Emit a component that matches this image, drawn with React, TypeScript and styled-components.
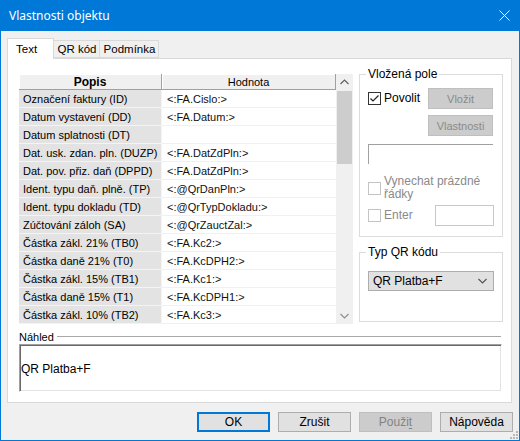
import React from 'react';
import styled, { createGlobalStyle } from 'styled-components';

const GlobalStyle = createGlobalStyle`
  html, body {
    margin: 0;
    padding: 0;
    background: #f0f0f0;
  }
  body {
    font-family: 'Liberation Sans', Arial, sans-serif;
    font-size: 11px;
    color: #000;
  }
  * {
    box-sizing: border-box;
  }
`;

const Window = styled.div`
  position: relative;
  width: 520px;
  height: 441px;
  border: 1px solid #0078d7;
  border-top: none;
  background: #f0f0f0;
  display: flex;
  flex-direction: column;
`;

const TitleBar = styled.div`
  height: 31px;
  flex: none;
  background: #0078d7;
  color: #fff;
  display: flex;
  align-items: center;
  justify-content: space-between;
  padding: 0 9px 0 8px;
  font-family: 'Noto Sans', 'Liberation Sans', sans-serif;
  font-size: 12px;
`;

const CloseButton = styled.span`
  display: flex;
  align-items: center;
  margin-top: -1px;
`;

const Body = styled.div`
  flex: 1;
  display: flex;
  flex-direction: column;
  padding: 7px 7px 0 6px;
`;

const TabStrip = styled.div`
  display: flex;
  align-items: flex-end;
  height: 20px;
`;

const Tab = styled.div<{ $active?: boolean; $width: number }>`
  position: relative;
  width: ${(p) => p.$width}px;
  height: ${(p) => (p.$active ? 21 : 18)}px;
  margin-bottom: ${(p) => (p.$active ? -1 : 0)}px;
  margin-left: ${(p) => (p.$active ? 0 : -1)}px;
  z-index: ${(p) => (p.$active ? 1 : 0)};
  background: ${(p) => (p.$active ? '#fff' : '#f0f0f0')};
  border: 1px solid #d9d9d9;
  border-bottom: ${(p) => (p.$active ? 'none' : '1px solid #d9d9d9')};
  display: flex;
  align-items: ${(p) => (p.$active ? 'flex-start' : 'center')};
  justify-content: ${(p) => (p.$active ? 'flex-start' : 'center')};
  padding: ${(p) => (p.$active ? '3px 0 0 8px' : '0 0 0 1px')};
  font-size: 11.5px;
  line-height: 14px;
  &:first-child {
    margin-left: 0;
  }
`;

const Panel = styled.div`
  height: 345px;
  background: #fff;
  border: 1px solid #d9d9d9;
  display: flex;
  flex-direction: column;
  padding: 15px 8px 0 11px;
`;

const TopRow = styled.div`
  display: flex;
  gap: 6px;
  height: 250px;
`;

const GridBox = styled.div`
  width: 334px;
  display: flex;
`;

const Table = styled.div`
  width: 317px;
  display: grid;
  grid-template-columns: 143px 174px;
  grid-auto-rows: 18px;
  grid-template-rows: 16px;
  overflow: hidden;
`;

const HeaderCell = styled.div<{ $bold?: boolean }>`
  background: #f0f0f0;
  border-right: 1px solid #a0a0a0;
  border-bottom: 1px solid #a0a0a0;
  box-shadow: inset 1px 1px 0 #fff;
  display: flex;
  align-items: center;
  justify-content: center;
  font-weight: ${(p) => (p.$bold ? 700 : 400)};
  font-size: ${(p) => (p.$bold ? 12 : 11)}px;
  line-height: 14px;
`;

const LabelCell = styled.div`
  background: #e3e3e3;
  border-right: 1px solid #f4f4f4;
  border-bottom: 1px solid #f4f4f4;
  display: flex;
  align-items: center;
  padding-left: 4px;
  white-space: nowrap;
`;

const ValueCell = styled.div`
  background: #fff;
  border-bottom: 1px solid #f0f0f0;
  display: flex;
  align-items: center;
  padding-left: 5px;
  white-space: nowrap;
  color: #111;
`;

const ScrollBar = styled.div`
  width: 17px;
  background: #f0f0f0;
  display: flex;
  flex-direction: column;
`;

const ScrollArrow = styled.div`
  height: 16px;
  display: flex;
  align-items: center;
  justify-content: center;
`;

const ScrollTrack = styled.div`
  flex: 1;
  padding: 1px 1px 0;
`;

const Thumb = styled.div`
  height: 73px;
  background: #cdcdcd;
`;

const RightColumn = styled.div`
  width: 144px;
  margin-top: -6px;
  display: flex;
  flex-direction: column;
  gap: 9px;
`;

const GroupBox = styled.fieldset<{ $padTop: number; $padBottom: number }>`
  margin: 0;
  border: 1px solid #dcdcdc;
  padding: ${(p) => p.$padTop}px 9px ${(p) => p.$padBottom}px 8px;
  min-inline-size: 0;
  display: flex;
  flex-direction: column;
`;

const Legend = styled.legend`
  padding: 0 2px;
  margin-left: -2px;
  line-height: 13px;
  font-size: 12px;
`;

const Row = styled.div<{ $mt?: number }>`
  display: flex;
  align-items: center;
  justify-content: space-between;
  margin-top: ${(p) => p.$mt ?? 0}px;
`;

const CheckLabel = styled.label<{ $disabled?: boolean }>`
  display: flex;
  align-items: center;
  gap: 3px;
  color: ${(p) => (p.$disabled ? '#8a8a8a' : '#000')};
  font-size: 12px;
  line-height: 13px;
`;

const Box = styled.span<{ $disabled?: boolean }>`
  width: 13px;
  height: 13px;
  flex: none;
  border: 1px solid ${(p) => (p.$disabled ? '#c4c4c4' : '#333')};
  background: #fff;
  display: flex;
  align-items: center;
  justify-content: center;
`;

const SmallButton = styled.div`
  width: 65px;
  height: 21px;
  margin-left: auto;
  background: #cccccc;
  border: 1px solid #bfbfbf;
  color: #8a8a8a;
  display: flex;
  align-items: center;
  justify-content: center;
`;

const InsetField = styled.div<{ $mt?: number }>`
  height: 20px;
  margin-top: ${(p) => p.$mt ?? 0}px;
  border-top: 1px solid #a0a0a0;
  border-left: 1px solid #a0a0a0;
  background: #fff;
`;

const SmallInput = styled.div`
  width: 59px;
  height: 21px;
  margin-right: -1px;
  border: 1px solid #c8c8c8;
  background: #fff;
`;

const Select = styled.div`
  width: 126px;
  height: 20px;
  background: #e1e1e1;
  border: 1px solid #adadad;
  display: flex;
  align-items: center;
  justify-content: space-between;
  padding: 0 6px 0 4px;
  font-size: 12px;
`;

const PreviewHeader = styled.div`
  display: flex;
  align-items: center;
  gap: 3px;
  height: 13px;
  margin-top: 6px;
  margin-right: 2px;
`;

const Rule = styled.div`
  flex: 1;
  height: 1px;
  background: #a8a8a8;
`;

const Preview = styled.div`
  height: 48px;
  margin: 1px 1px 0 0;
  border-top: 1px solid #a0a0a0;
  border-left: 1px solid #a0a0a0;
  border-right: 1px solid #fff;
  border-bottom: 1px solid #fff;
  box-shadow: inset 1px 1px 0 #696969, inset -1px -1px 0 #e3e3e3;
  display: flex;
  align-items: center;
  padding: 1px 0 0 1px;
  font-size: 12px;
`;

const ButtonRow = styled.div`
  display: flex;
  justify-content: flex-end;
  gap: 8px;
  margin-top: 9px;
  margin-right: -1px;
`;

const DialogButton = styled.div<{ $default?: boolean; $disabled?: boolean }>`
  width: 73px;
  height: 20px;
  display: flex;
  align-items: center;
  justify-content: center;
  background: ${(p) => (p.$disabled ? '#cccccc' : '#e1e1e1')};
  border: ${(p) => (p.$default ? '2px solid #0078d7' : `1px solid ${p.$disabled ? '#bfbfbf' : '#adadad'}`)};
  color: ${(p) => (p.$disabled ? '#838383' : '#000')};
  font-size: 12px;
  u {
    text-decoration: underline;
    text-underline-offset: 2px;
  }
`;

const Grip = styled.svg`
  position: absolute;
  right: 1px;
  bottom: 1px;
`;

const rows: [string, string][] = [
  ['Označení faktury (ID)', '<:FA.Cislo:>'],
  ['Datum vystavení (DD)', '<:FA.Datum:>'],
  ['Datum splatnosti (DT)', ''],
  ['Dat. usk. zdan. pln. (DUZP)', '<:FA.DatZdPln:>'],
  ['Dat. pov. přiz. daň (DPPD)', '<:FA.DatZdPln:>'],
  ['Ident. typu daň. plně. (TP)', '<:@QrDanPln:>'],
  ['Ident. typu dokladu (TD)', '<:@QrTypDokladu:>'],
  ['Zúčtování záloh (SA)', '<:@QrZauctZal:>'],
  ['Částka zákl. 21% (TB0)', '<:FA.Kc2:>'],
  ['Částka daně 21% (T0)', '<:FA.KcDPH2:>'],
  ['Částka zákl. 15% (TB1)', '<:FA.Kc1:>'],
  ['Částka daně 15% (T1)', '<:FA.KcDPH1:>'],
  ['Částka zákl. 10% (TB2)', '<:FA.Kc3:>'],
];

const Chevron = ({ up, color = '#606060' }: { up?: boolean; color?: string }) => (
  <svg width="9" height="6" viewBox="0 0 9 6">
    <polyline
      points={up ? '0.5,5 4.5,1 8.5,5' : '0.5,1 4.5,5 8.5,1'}
      fill="none"
      stroke={color}
      strokeWidth="1.2"
    />
  </svg>
);

const CheckBox = ({ checked, disabled }: { checked?: boolean; disabled?: boolean }) => (
  <Box $disabled={disabled}>
    {checked && (
      <svg width="11" height="11" viewBox="0 0 11 11">
        <polyline points="1.5,5.5 4,8 9.5,2.5" fill="none" stroke="#222" strokeWidth="1.2" />
      </svg>
    )}
  </Box>
);

export default function App() {
  return (
    <>
      <GlobalStyle />
      <Window>
        <TitleBar>
          <span>Vlastnosti objektu</span>
          <CloseButton>
            <svg width="11" height="11" viewBox="0 0 11 11">
              <path d="M0.5 0.5 L10.5 10.5 M10.5 0.5 L0.5 10.5" stroke="#fff" strokeWidth="1" />
            </svg>
          </CloseButton>
        </TitleBar>
        <Body>
          <TabStrip>
            <Tab $active $width={47}>Text</Tab>
            <Tab $width={47}>QR kód</Tab>
            <Tab $width={60}>Podmínka</Tab>
          </TabStrip>
          <Panel>
            <TopRow>
              <GridBox>
                <Table>
                  <HeaderCell $bold>Popis</HeaderCell>
                  <HeaderCell>Hodnota</HeaderCell>
                  {rows.map(([label, value]) => (
                    <React.Fragment key={label}>
                      <LabelCell>{label}</LabelCell>
                      <ValueCell>{value}</ValueCell>
                    </React.Fragment>
                  ))}
                </Table>
                <ScrollBar>
                  <ScrollArrow>
                    <Chevron up />
                  </ScrollArrow>
                  <ScrollTrack>
                    <Thumb />
                  </ScrollTrack>
                  <ScrollArrow>
                    <Chevron color="#909090" />
                  </ScrollArrow>
                </ScrollBar>
              </GridBox>
              <RightColumn>
                <GroupBox $padTop={7} $padBottom={10}>
                  <Legend>Vložená pole</Legend>
                  <Row>
                    <CheckLabel>
                      <CheckBox checked />
                      Povolit
                    </CheckLabel>
                    <SmallButton>Vložit</SmallButton>
                  </Row>
                  <Row $mt={6}>
                    <SmallButton>Vlastnosti</SmallButton>
                  </Row>
                  <InsetField $mt={8} />
                  <Row $mt={11}>
                    <CheckLabel $disabled>
                      <CheckBox disabled />
                      <span>
                        Vynechat prázdné
                        <br />
                        řádky
                      </span>
                    </CheckLabel>
                  </Row>
                  <Row $mt={4}>
                    <CheckLabel $disabled>
                      <CheckBox disabled />
                      Enter
                    </CheckLabel>
                    <SmallInput />
                  </Row>
                </GroupBox>
                <GroupBox $padTop={12} $padBottom={30}>
                  <Legend>Typ QR kódu</Legend>
                  <Select>
                    <span>QR Platba+F</span>
                    <Chevron color="#555" />
                  </Select>
                </GroupBox>
              </RightColumn>
            </TopRow>
            <PreviewHeader>
              <span>Náhled</span>
              <Rule />
            </PreviewHeader>
            <Preview>QR Platba+F</Preview>
          </Panel>
          <ButtonRow>
            <DialogButton $default>OK</DialogButton>
            <DialogButton>Zrušit</DialogButton>
            <DialogButton $disabled>
              <span>
                Použi<u>t</u>
              </span>
            </DialogButton>
            <DialogButton>Nápověda</DialogButton>
          </ButtonRow>
        </Body>
        <Grip width="10" height="10" viewBox="0 0 10 10">
          {[
            [8, 2],
            [5, 5],
            [8, 5],
            [2, 8],
            [5, 8],
            [8, 8],
          ].map(([x, y]) => (
            <rect key={`${x}-${y}`} x={x} y={y} width="2" height="2" fill="#b8b8b8" />
          ))}
        </Grip>
      </Window>
    </>
  );
}
